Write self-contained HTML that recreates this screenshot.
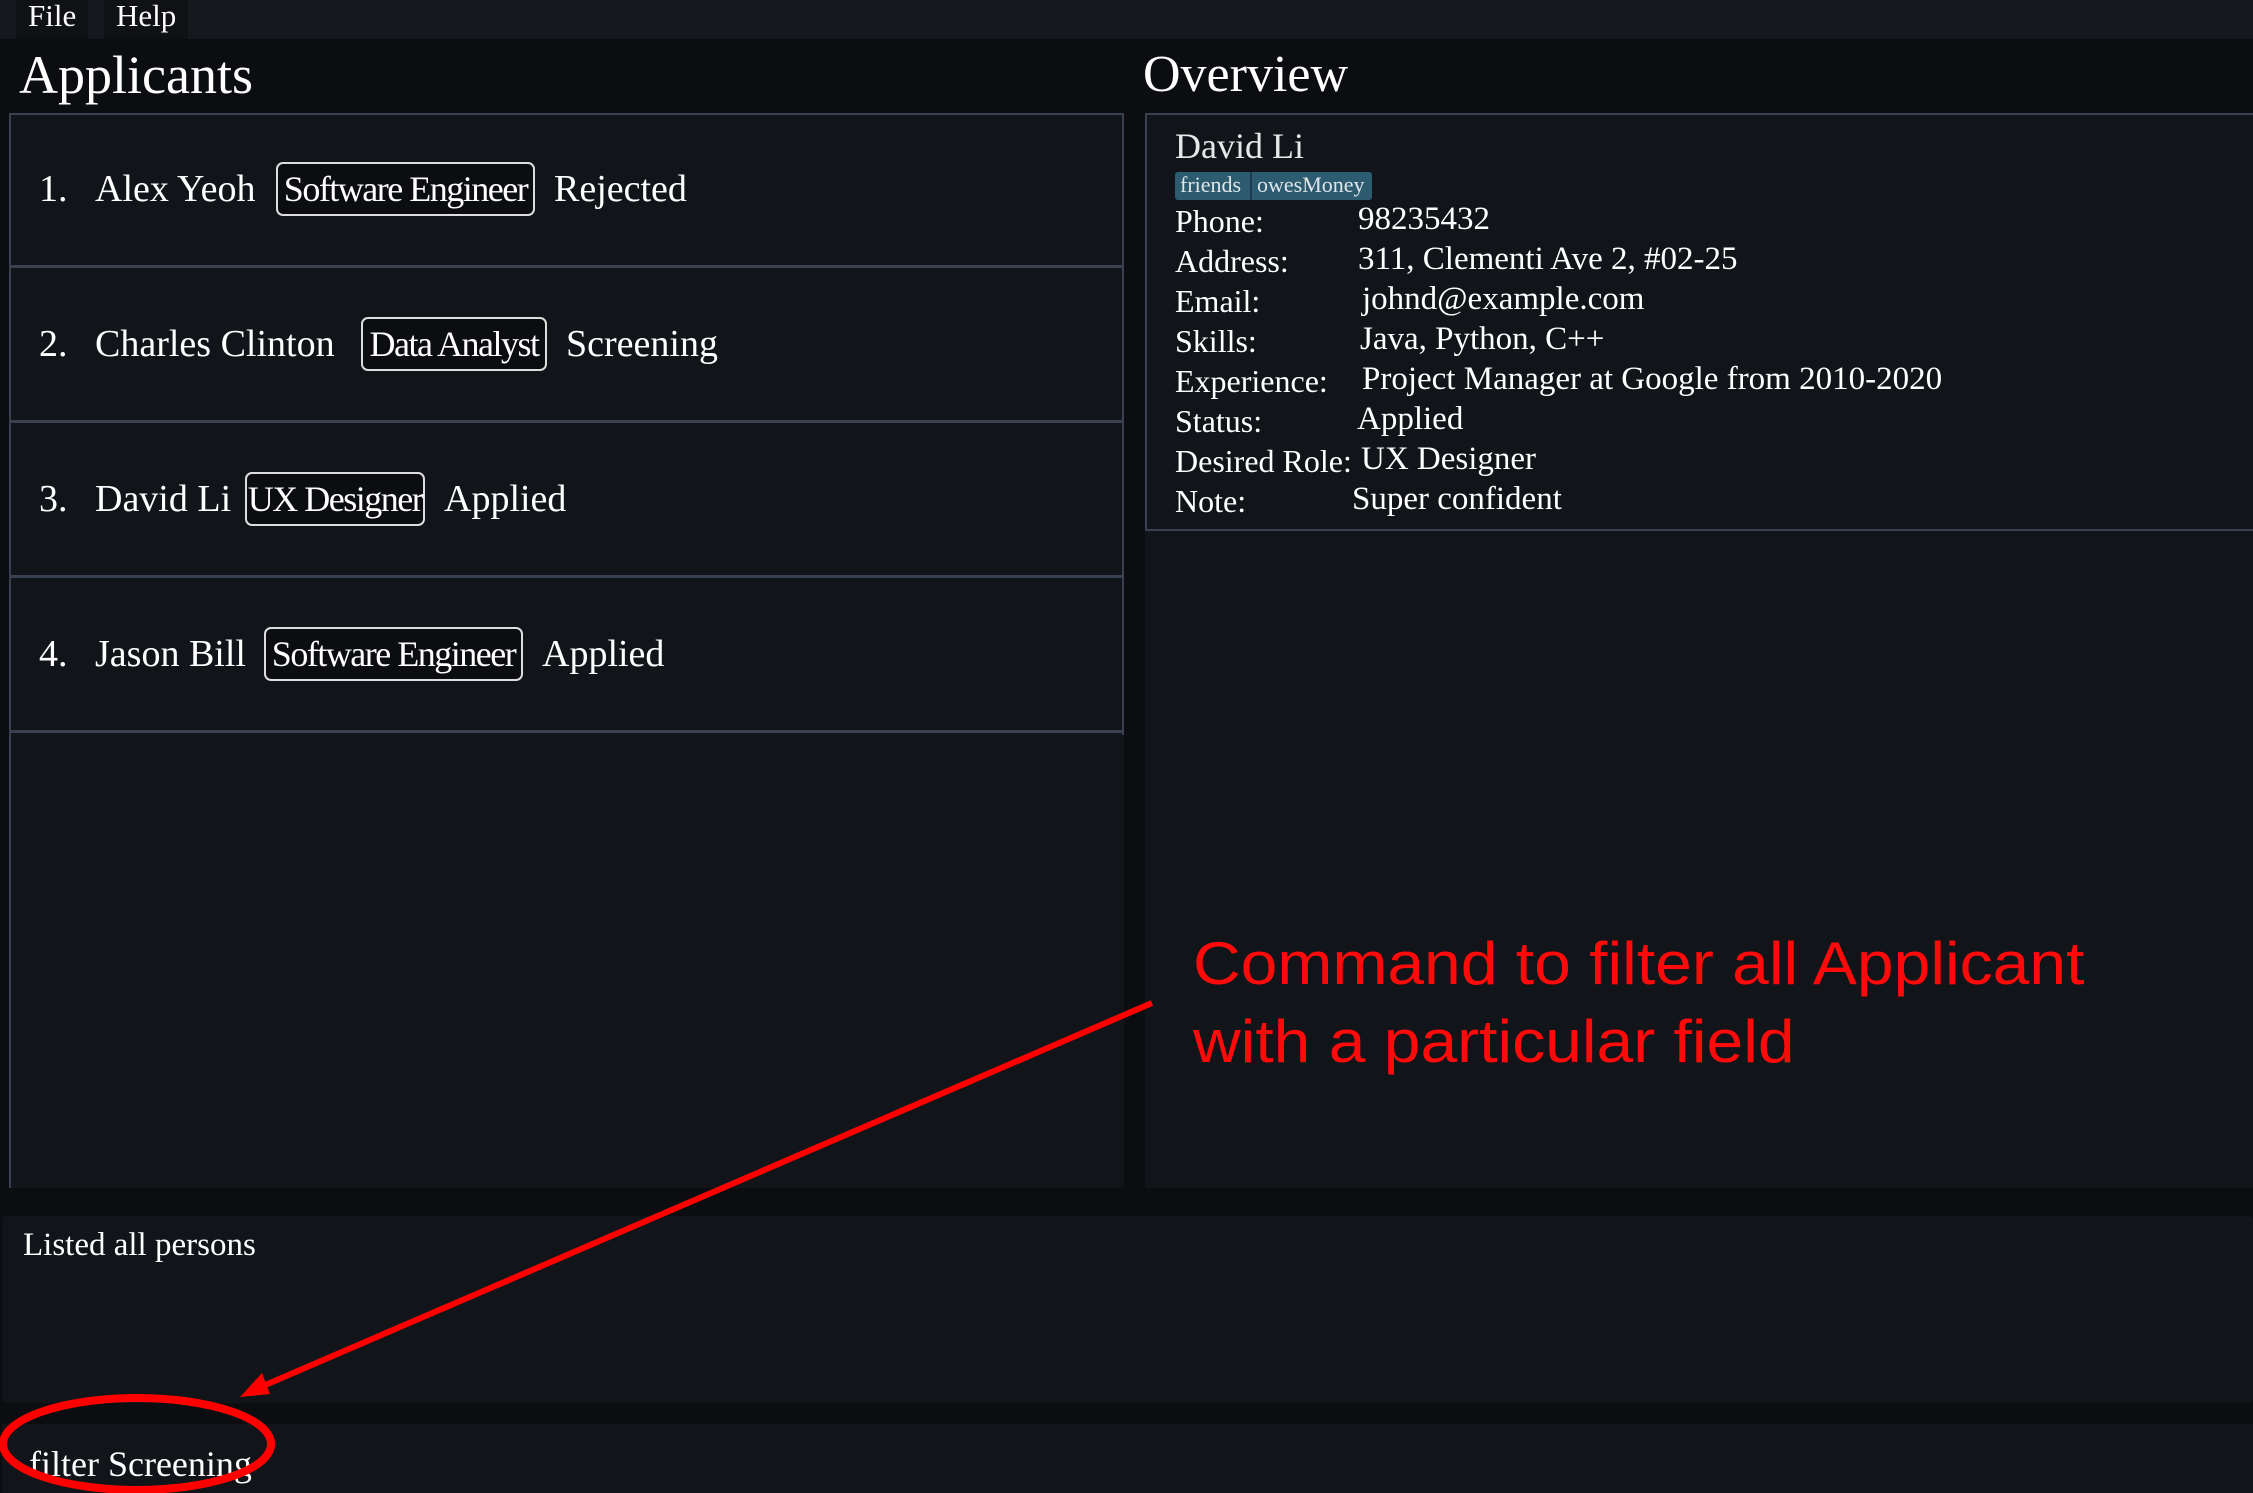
<!DOCTYPE html>
<html><head><meta charset="utf-8"><style>
*{margin:0;padding:0;box-sizing:border-box}
body{width:2253px;height:1493px;background:#0b0d11;position:relative;overflow:hidden;font-family:"Liberation Serif",serif;color:#fff}
.a{position:absolute;white-space:nowrap}
.menu{left:0;top:0;width:2253px;height:39px;background:#15181d}
.mi{top:0;height:39px;background:#0f1115;font-size:31px;line-height:32px;padding:0 12px}
.panel{background:#111419}
.cell{left:9px;width:1115px;height:155px;border-bottom:3px solid #394150;font-size:38px}
.cell span{position:absolute;top:54px}
.tag{border:2px solid #ddd;border-radius:7px;line-height:50px;top:49px!important;background:#0b0d10;text-align:center;letter-spacing:-1.5px;font-size:36px}
.lbl{font-size:32px;left:1175px}
.val{font-size:33px}
</style></head><body>
<div class="a menu"></div>
<div class="a mi" style="left:16px">File</div>
<div class="a mi" style="left:104px">Help</div>
<div class="a" style="left:19px;top:44px;font-size:54px">Applicants</div>
<div class="a" style="left:1143px;top:45px;font-size:52px">Overview</div>
<div class="a panel" style="left:9px;top:113px;width:1115px;height:1075px;border-left:2px solid #394150;border-top:2px solid #394150"></div>
<div class="a cell" style="top:113px"><span style="left:30px">1.</span><span style="left:86px">Alex Yeoh</span><span class="tag" style="left:267px;width:259px">Software Engineer</span><span style="left:545px">Rejected</span></div>
<div class="a cell" style="top:268px"><span style="left:30px">2.</span><span style="left:86px">Charles Clinton</span><span class="tag" style="left:352px;width:186px">Data Analyst</span><span style="left:557px">Screening</span></div>
<div class="a cell" style="top:423px"><span style="left:30px">3.</span><span style="left:86px">David Li</span><span class="tag" style="left:236px;width:180px">UX Designer</span><span style="left:435px">Applied</span></div>
<div class="a cell" style="top:578px"><span style="left:30px">4.</span><span style="left:86px">Jason Bill</span><span class="tag" style="left:255px;width:259px">Software Engineer</span><span style="left:533px">Applied</span></div>
<div class="a" style="left:1122px;top:113px;width:2px;height:622px;background:#394150"></div>
<div class="a panel" style="left:1145px;top:113px;width:1108px;height:1075px"></div>
<div class="a" style="left:1145px;top:113px;width:1108px;height:418px;border:2px solid #394150;border-right:none"></div>
<div class="a" style="left:1175px;top:125px;font-size:36px;color:#e8e8e8">David Li</div>
<div class="a" style="left:1175px;top:172px;height:28px;width:197px;background:#2d5b70;border-radius:3px"></div>
<div class="a" style="left:1180px;top:171px;font-size:22px;line-height:28px;color:#dfe6ea">friends</div>
<div class="a" style="left:1257px;top:171px;font-size:22px;line-height:28px;color:#dfe6ea">owesMoney</div>
<div class="a" style="left:1250px;top:172px;width:2px;height:28px;background:#1d3d4c"></div>
<div class="a lbl" style="top:203px">Phone:</div><div class="a val" style="left:1358px;top:201px">98235432</div>
<div class="a lbl" style="top:243px">Address:</div><div class="a val" style="left:1358px;top:241px">311, Clementi Ave 2, #02-25</div>
<div class="a lbl" style="top:283px">Email:</div><div class="a val" style="left:1362px;top:281px">johnd@example.com</div>
<div class="a lbl" style="top:323px">Skills:</div><div class="a val" style="left:1360px;top:321px">Java, Python, C++</div>
<div class="a lbl" style="top:363px">Experience:</div><div class="a val" style="left:1362px;top:361px">Project Manager at Google from 2010-2020</div>
<div class="a lbl" style="top:403px">Status:</div><div class="a val" style="left:1357px;top:401px">Applied</div>
<div class="a lbl" style="top:443px">Desired Role:</div><div class="a val" style="left:1361px;top:441px">UX Designer</div>
<div class="a lbl" style="top:483px">Note:</div><div class="a val" style="left:1352px;top:481px">Super confident</div>
<div class="a panel" style="left:2px;top:1216px;width:2251px;height:187px;border-radius:4px"></div>
<div class="a" style="left:23px;top:1227px;font-size:33px">Listed all persons</div>
<div class="a panel" style="left:2px;top:1424px;width:2251px;height:69px"></div>
<div class="a" style="left:29px;top:1443px;font-size:36px">filter Screening</div>
<div class="a" style="left:1193px;top:925px;font-family:'Liberation Sans',sans-serif;font-size:60px;line-height:78px;color:#ff0a0a;transform:scaleX(1.1);transform-origin:left">Command to filter all Applicant<br>with a particular field</div>
<svg class="a" style="left:0;top:0" width="2253" height="1493">
<line x1="1152" y1="1003" x2="256" y2="1389" stroke="#f00" stroke-width="6"/>
<polygon points="240,1397 262,1373 270,1394" fill="#f00"/>
<ellipse cx="137" cy="1444" rx="134" ry="46" fill="none" stroke="#f00" stroke-width="8"/>
</svg>
</body></html>
